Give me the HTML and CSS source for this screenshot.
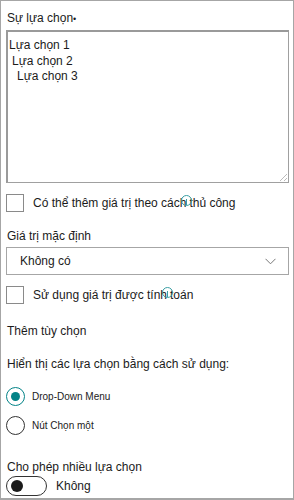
FILE: index.html
```html
<!DOCTYPE html>
<html lang="vi">
<head>
  <meta charset="UTF-8">
  <title>Lựa chọn</title>
  <link rel="stylesheet" href="styles.css">
</head>
<body>
  <div class="panel">
    <div class="field">
      <label class="label">Sự lựa chọn<span class="req">•</span></label>
      <div class="choices">
        <div>Lựa chọn 1</div>
        <div class="ind1">Lựa chọn 2</div>
        <div class="ind2">Lựa chọn 3</div>
        <span class="grip"></span>
      </div>
    </div>

    <div class="check-row">
      <span class="box"></span>
      <span>Có thể thêm giá trị theo cách</span><span class="info-wrap"><span class="info"></span>thủ công</span>
    </div>

    <div class="field">
      <label class="label">Giá trị mặc định</label>
      <div class="select">
        <span>Không có</span>
        <svg class="chev" width="11" height="7" viewBox="0 0 11 7"><path d="M0.5 0.8 L5.5 5.8 L10.5 0.8" fill="none" stroke="#777" stroke-width="1"/></svg>
      </div>
    </div>

    <div class="check-row">
      <span class="box"></span>
      <span>Sử dụng giá trị được tính</span><span class="info-wrap"><span class="info"></span>toán</span>
    </div>

    <div class="section">Thêm tùy chọn</div>

    <div class="section second">Hiển thị các lựa chọn bằng cách sử dụng:</div>

    <div class="radios">
      <div class="radio-row"><span class="radio on"></span><span class="small">Drop-Down Menu</span></div>
      <div class="radio-row"><span class="radio"></span><span class="small">Nút Chọn một</span></div>
    </div>

    <div class="multi">
      <div>Cho phép nhiều lựa chọn</div>
      <div class="toggle-row"><span class="toggle"><span class="knob"></span></span><span>Không</span></div>
    </div>
  </div>
</body>
</html>
```

FILE: styles.css
```css
body {
  margin: 0;
  font-family: "Liberation Sans", Arial, sans-serif;
  font-size: 12px;
  color: #1b1b1b;
  background: #fff;
}

.panel {
  box-sizing: border-box;
  width: 294px;
  height: 500px;
  border: 1px solid #a6a6a6;
  border-bottom-width: 2px;
  padding: 9px 4px 0 5px;
}

.label {
  display: block;
  line-height: 16px;
  margin-bottom: 3px;
  margin-left: 1px;
}

.req {
  font-size: 9px;
}

.choices {
  position: relative;
  height: 144px;
  border: 1px solid #a0a0a0;
  border-top: 2px solid #9a9a9a;
  border-left: 2px solid #9a9a9a;
  padding: 6px 0 0 1px;
  line-height: 15.5px;
}

.ind1 { padding-left: 3px; }
.ind2 { padding-left: 8px; }

.grip {
  position: absolute;
  right: 1px;
  bottom: 1px;
  width: 7px;
  height: 7px;
  background: linear-gradient(135deg, transparent 45%, #bbb 45%, #bbb 55%, transparent 55%, transparent 72%, #bbb 72%, #bbb 82%, transparent 82%);
}

.check-row {
  display: flex;
  align-items: center;
  height: 18px;
  margin-top: 11px;
}

.box {
  width: 16px;
  height: 16px;
  border: 1px solid #8a8a8a;
  margin-right: 9px;
  flex: none;
}

.info-wrap {
  position: relative;
  margin-left: 3px;
}

.info {
  position: absolute;
  left: -8px;
  top: -1px;
  width: 9px;
  height: 9px;
  border: 1.3px solid #3a9ea3;
  border-radius: 50%;
}

.info::after {
  content: "";
  position: absolute;
  left: 4px;
  top: 3px;
  width: 1px;
  height: 6px;
  background: #3a9ea3;
}

.check-row + .field {
  margin-top: 16px;
}

.select {
  display: flex;
  align-items: center;
  justify-content: space-between;
  height: 26px;
  border: 1px solid #a6a6a6;
  padding: 0 12px 0 13px;
}

.section {
  margin-top: 19px;
  margin-left: 1px;
  line-height: 16px;
}

.section.second {
  margin-top: 17px;
}

.radios {
  margin-top: 14px;
}

.radio-row {
  display: flex;
  align-items: center;
  height: 20px;
  margin-bottom: 9px;
}

.radio {
  box-sizing: border-box;
  width: 19px;
  height: 19px;
  border: 1px solid #333;
  border-radius: 50%;
  margin-right: 7px;
  position: relative;
}

.radio.on {
  border-color: #038387;
}

.radio.on::after {
  content: "";
  position: absolute;
  left: 4px;
  top: 4px;
  width: 9px;
  height: 9px;
  border-radius: 50%;
  background: #038387;
}

.small {
  font-size: 10px;
}

.multi {
  margin-top: 24px;
  margin-left: 1px;
  line-height: 16px;
}

.toggle-row {
  display: flex;
  align-items: center;
  margin-top: 1px;
  margin-left: -1px;
}

.toggle {
  box-sizing: border-box;
  width: 41px;
  height: 20px;
  border: 1px solid #333;
  border-radius: 10px;
  margin-right: 9px;
  position: relative;
}

.knob {
  position: absolute;
  left: 4px;
  top: 3px;
  width: 12px;
  height: 12px;
  border-radius: 50%;
  background: #1b1b1b;
}
```
